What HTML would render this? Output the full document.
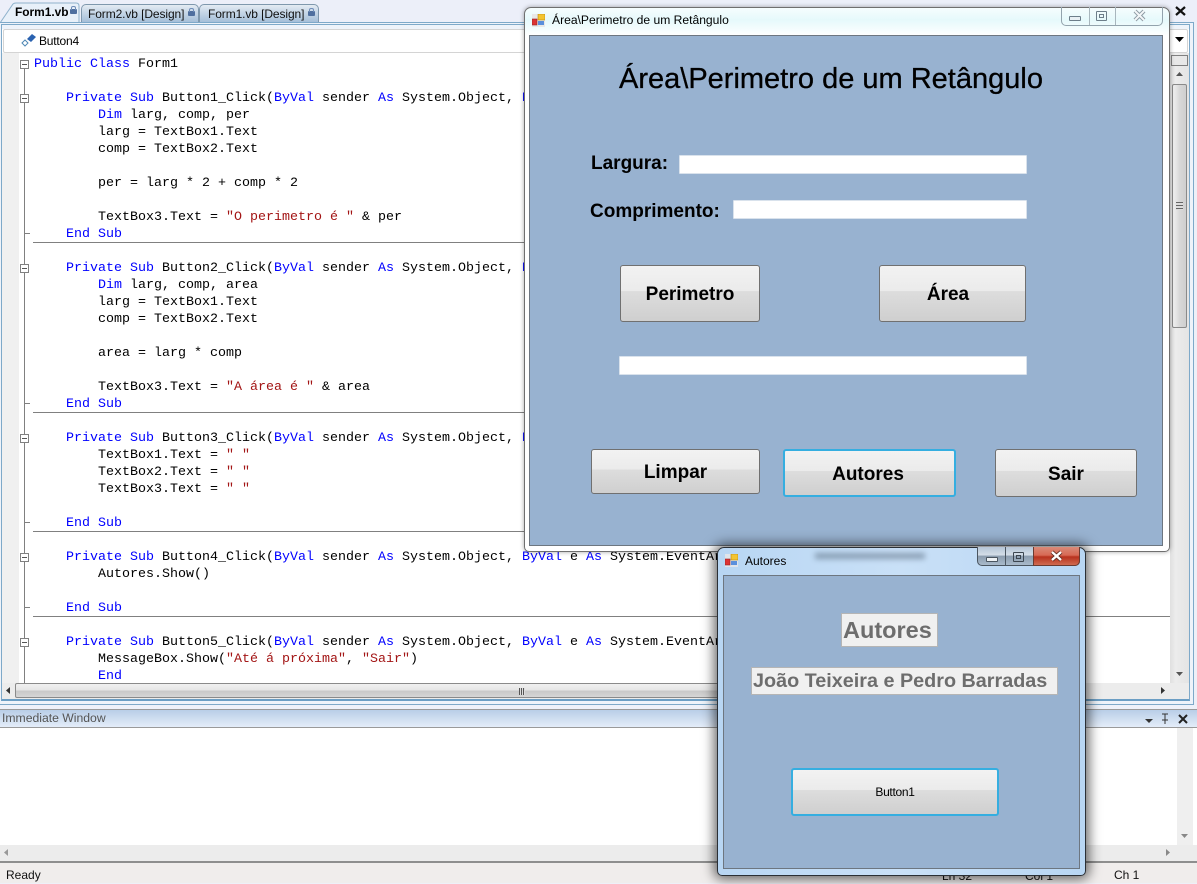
<!DOCTYPE html>
<html><head><meta charset="utf-8"><style>
html,body{margin:0;padding:0}
body{width:1197px;height:883px;overflow:hidden;position:relative;background:#eef0f8;font-family:"Liberation Sans",sans-serif}
.a{position:absolute;box-sizing:border-box}
.t{white-space:nowrap}
.code{position:absolute;left:34px;top:56px;width:700px;font:13.33px/17px "Liberation Mono",monospace;color:#000;white-space:pre}
.code b{font-weight:normal;color:#0000ff}.code i{font-style:normal;color:#a31515}
.tab{position:absolute;top:4px;height:18px;font-size:12px;line-height:19px;letter-spacing:-.1px;white-space:nowrap;box-sizing:border-box;background:linear-gradient(#e4ebf3,#c9d8e8 40%,#a5bfd9);border:1px solid #7f98ad;border-bottom:0;border-radius:5px 5px 0 0;color:#111}
.lock{position:absolute;width:7px;height:5px;background:#4f6f9f;border-radius:1px}
.lock:before{content:"";position:absolute;left:1px;top:-3px;width:5px;height:4px;box-sizing:border-box;border:1px solid #6f8db8;border-bottom:0;border-radius:2px 2px 0 0}
.sep{position:absolute;left:33px;width:1138px;height:1px;background:#808080}
.box{position:absolute;width:9px;height:9px;left:20px;border:1px solid #808080;background:#fff;box-sizing:border-box}
.box:after{content:"";position:absolute;left:1px;top:3px;width:5px;height:1px;background:#555}
.tick{position:absolute;left:24px;width:6px;height:1px;background:#808080}
.btn{position:absolute;box-sizing:border-box;border:1px solid #707070;border-radius:3px;background:linear-gradient(#f2f2f2 0,#ebebeb 45%,#dddddd 46%,#cfcfcf 100%);text-align:center;font-weight:bold;font-size:19px;color:#000;white-space:nowrap}
.btn.f{border:2px solid #35aee0}
.inp{position:absolute;background:#fff;border:1px solid #d9e2ec;box-sizing:border-box;border-radius:1px}
.lab{position:absolute;font-weight:bold;font-size:19px;color:#000;white-space:nowrap}
.win{position:absolute;box-sizing:border-box;border-radius:7px 7px 5px 5px}
.client{position:absolute;background:#98b2d0;border:1px solid #6d7680;box-sizing:border-box}
.ficon{position:absolute;width:13px;height:13px}
</style></head><body>

<!-- tabs -->
<div class="a" style="left:0;top:0;width:1197px;height:24px;background:#eceff9"></div>
<div class="tab" style="left:81px;width:118px;padding-left:6px">Form2.vb [Design]<span class="lock" style="left:106px;top:6px"></span></div>
<div class="tab" style="left:199px;width:120px;padding-left:8px">Form1.vb [Design]<span class="lock" style="left:108px;top:6px"></span></div>
<svg class="a" style="left:0;top:2px" width="82" height="24"><path d="M0 21L13 2Q14 1 16 1H76Q79 1 79 4V21z" fill="#e8f0f9" stroke="#8fb2cc"/></svg>
<div class="a t" style="left:15px;top:3px;font-weight:bold;font-size:11.900px;line-height:19px;color:#000">Form1.vb</div>
<span class="lock" style="left:70px;top:9px"></span>
<svg class="a" style="left:1174px;top:5px" width="13" height="12"><path d="M2 2l9 8M11 2l-9 8" stroke="#111" stroke-width="2.200" fill="none"/></svg>

<!-- editor frame -->
<div class="a" style="left:-2px;top:22px;width:1196px;height:683px;background:#eef3fa;border:1px solid #7ea9c9"></div>
<div class="a" style="left:1px;top:24px;width:1189px;height:677px;background:#fff;border:1px solid #7ea9c9;border-bottom:2px solid #6b9ec4"></div>
<div class="a" style="left:2px;top:25px;width:1187px;height:4px;background:#eef3fa"></div>
<div class="a" style="left:3px;top:29px;width:1185px;height:24px;background:#fff;border:1px solid #d4d4d4;border-radius:2px"></div>
<div class="a t" style="left:39px;top:33px;font-size:12px;line-height:16px;color:#000;letter-spacing:-.2px">Button4</div>
<svg class="a" style="left:20px;top:32px" width="17" height="16"><path d="M2 11l3-3 3 3-3 3z" fill="#fff" stroke="#4f88b5"/><path d="M7 7l5-5 4 3-5 5z" fill="#2a62b0"/></svg>
<svg class="a" style="left:1175px;top:37px" width="10" height="6"><path d="M0 0h9L4.500 5z" fill="#000"/></svg>

<!-- margin -->
<div class="a" style="left:2px;top:53px;width:17px;height:630px;background:#f0f0f0"></div>
<div class="a" style="left:24px;top:68px;width:1px;height:615px;background:#808080"></div>
<div class="box" style="top:60px"></div><div class="box" style="top:94px"></div><div class="box" style="top:264px"></div><div class="box" style="top:434px"></div><div class="box" style="top:553px"></div><div class="box" style="top:638px"></div>
<div class="tick" style="top:233px"></div><div class="tick" style="top:403px"></div><div class="tick" style="top:522px"></div><div class="tick" style="top:607px"></div>
<div class="sep" style="top:242px"></div><div class="sep" style="top:412px"></div><div class="sep" style="top:531px"></div><div class="sep" style="top:616px"></div>

<div class="code"><b>Public</b> <b>Class</b> Form1

    <b>Private</b> <b>Sub</b> Button1_Click(<b>ByVal</b> sender <b>As</b> System.Object, <b>ByVal</b> e <b>As</b> System.EventArgs)
        <b>Dim</b> larg, comp, per
        larg = TextBox1.Text
        comp = TextBox2.Text

        per = larg * 2 + comp * 2

        TextBox3.Text = <i>"O perimetro é "</i> &amp; per
    <b>End</b> <b>Sub</b>

    <b>Private</b> <b>Sub</b> Button2_Click(<b>ByVal</b> sender <b>As</b> System.Object, <b>ByVal</b> e <b>As</b> System.EventArgs)
        <b>Dim</b> larg, comp, area
        larg = TextBox1.Text
        comp = TextBox2.Text

        area = larg * comp

        TextBox3.Text = <i>"A área é "</i> &amp; area
    <b>End</b> <b>Sub</b>

    <b>Private</b> <b>Sub</b> Button3_Click(<b>ByVal</b> sender <b>As</b> System.Object, <b>ByVal</b> e <b>As</b> System.EventArgs)
        TextBox1.Text = <i>" "</i>
        TextBox2.Text = <i>" "</i>
        TextBox3.Text = <i>" "</i>

    <b>End</b> <b>Sub</b>

    <b>Private</b> <b>Sub</b> Button4_Click(<b>ByVal</b> sender <b>As</b> System.Object, <b>ByVal</b> e <b>As</b> System.EventArgs)
        Autores.Show()

    <b>End</b> <b>Sub</b>

    <b>Private</b> <b>Sub</b> Button5_Click(<b>ByVal</b> sender <b>As</b> System.Object, <b>ByVal</b> e <b>As</b> System.EventArgs)
        MessageBox.Show(<i>"Até á próxima"</i>, <i>"Sair"</i>)
        <b>End</b></div>

<!-- right scrollbar -->
<div class="a" style="left:1170px;top:53px;width:19px;height:630px;background:linear-gradient(90deg,#e0e0e0,#ececec 30%,#e4e4e4)"></div>
<div class="a" style="left:1171px;top:55px;width:17px;height:11px;background:#e8e8e8;border:1px solid #808080"></div>
<svg class="a" style="left:1176px;top:72px" width="8" height="5"><path d="M0 4h7L3.500 0z" fill="#555"/></svg>
<div class="a" style="left:1172px;top:84px;width:15px;height:244px;background:linear-gradient(90deg,#f1f1f1,#d8d8d8 50%,#cfcfcf);border:1px solid #8a8a8a;border-radius:2px"></div>
<div class="a" style="left:1176px;top:202px;width:7px;height:8px;background:repeating-linear-gradient(#666 0 1px,#ddd 1px 3px)"></div>
<svg class="a" style="left:1176px;top:672px" width="8" height="5"><path d="M0 0h7L3.500 4z" fill="#555"/></svg>

<!-- bottom scrollbar -->
<div class="a" style="left:2px;top:683px;width:1187px;height:16px;background:#ececec"></div>
<div class="a" style="left:15px;top:683px;width:710px;height:15px;background:linear-gradient(#f0f0f0,#e6e6e6 45%,#c9c9c9 55%,#d6d6d6);border:1px solid #8a8a8a;border-radius:2px"></div>
<div class="a" style="left:519px;top:688px;width:6px;height:7px;background:repeating-linear-gradient(90deg,#555 0 1px,#ddd 1px 2px)"></div>
<svg class="a" style="left:6px;top:687px" width="5" height="8"><path d="M4 0v7L0 3.500z" fill="#333"/></svg>
<svg class="a" style="left:1161px;top:687px" width="5" height="8"><path d="M0 0v7l4-3.500z" fill="#333"/></svg>

<!-- splitter / immediate window -->
<div class="a" style="left:0;top:705px;width:1197px;height:4px;background:#eef1f9"></div>
<div class="a" style="left:0;top:709px;width:1197px;height:19px;background:linear-gradient(#b9cee7,#e4edf9);border-top:1px solid #9a9a9a;border-bottom:1px solid #9a9a9a"></div>
<div class="a t" style="left:2px;top:710px;font-size:12.200px;line-height:17px;color:#555">Immediate Window</div>
<svg class="a" style="left:1145px;top:712px" width="48" height="14"><path d="M0 7h8L4 11z" fill="#333"/><path d="M17 2h6M20 2v6M17 8h6M20 8v4" stroke="#333" fill="none"/><path d="M34 3l8 8M42 3l-8 8" stroke="#222" stroke-width="2" fill="none"/></svg>
<div class="a" style="left:0;top:728px;width:1197px;height:118px;background:#fff"></div>
<div class="a" style="left:1177px;top:728px;width:16px;height:117px;background:#efefef"></div>
<svg class="a" style="left:1181px;top:834px" width="8" height="5"><path d="M0 0h7L3.500 4z" fill="#888"/></svg>
<div class="a" style="left:0;top:845px;width:1197px;height:17px;background:#ececec"></div>
<svg class="a" style="left:4px;top:849px" width="5" height="8"><path d="M4 0v7L0 3.500z" fill="#999"/></svg>
<svg class="a" style="left:1166px;top:849px" width="5" height="8"><path d="M0 0v7l4-3.500z" fill="#888"/></svg>

<!-- status bar -->
<div class="a" style="left:0;top:861px;width:1197px;height:22px;background:#f0edec;border-top:2px solid #8e8e8e"></div>
<div class="a t" style="left:6px;top:868px;font-size:12px;line-height:15px;color:#111">Ready</div>
<div class="a t" style="left:942px;top:869px;font-size:12px;line-height:15px;color:#111">Ln 32</div>
<div class="a t" style="left:1025px;top:869px;font-size:12px;line-height:15px;color:#111">Col 1</div>
<div class="a t" style="left:1114px;top:868px;font-size:12px;line-height:15px;color:#111">Ch 1</div>

<!-- main window -->
<div class="win" style="left:524px;top:7px;width:646px;height:545px;background:linear-gradient(#f6fdfe,#e6f9fb 12px,#fff 28px);border:1px solid #6f6f6f;box-shadow:0 0 5px rgba(0,0,0,.35)"></div>
<svg class="ficon" style="left:532px;top:14px" viewBox="0 0 13 13"><rect x="0" y="0" width="13" height="13" fill="#e8e8e8"/><rect x="6" y="0" width="7" height="6" fill="#f4c430" stroke="#b98a10" stroke-width=".6"/><rect x="0" y="5" width="5" height="6" fill="#d33" stroke="#922" stroke-width=".6"/><rect x="6" y="7" width="6" height="4" fill="#5b8fdc"/></svg>
<div class="a t" style="left:552px;top:13px;font-size:12.100px;line-height:15px;color:#000">Área\Perimetro de um Retângulo</div>
<div class="a" style="left:1061px;top:7px;width:102px;height:19px;border:1px solid #93a3ad;border-top:0;border-radius:0 0 5px 5px"></div>
<div class="a" style="left:1089px;top:7px;width:1px;height:18px;background:#a8b6bd"></div>
<div class="a" style="left:1115px;top:7px;width:1px;height:18px;background:#a8b6bd"></div>
<div class="a" style="left:1069px;top:16px;width:12px;height:5px;border:1px solid #6d7e8a;background:#e8f0f4;border-radius:1px"></div>
<div class="a" style="left:1096px;top:11px;width:11px;height:10px;border:1px solid #6d7e8a;border-radius:1px"><div class="a" style="left:2px;top:2px;width:5px;height:4px;border:1px solid #6d7e8a"></div></div>
<svg class="a" style="left:1133px;top:9px" width="13" height="13"><path d="M2 2l9 9M11 2l-9 9" stroke="#8d9aa3" stroke-width="4" fill="none"/><path d="M2 2l9 9M11 2l-9 9" stroke="#f4f7f8" stroke-width="2" fill="none"/></svg>

<div class="client" style="left:529px;top:35px;width:634px;height:511px"></div>
<div class="a t" style="left:619px;top:62px;font-size:29px;line-height:34px;color:#000;-webkit-text-stroke:.3px #000">Área\Perimetro de um Retângulo</div>
<div class="lab" style="left:591px;top:153px;line-height:22px">Largura:</div>
<div class="inp" style="left:679px;top:155px;width:348px;height:19px"></div>
<div class="lab" style="left:590px;top:201px;line-height:22px">Comprimento:</div>
<div class="inp" style="left:733px;top:200px;width:294px;height:19px"></div>
<div class="btn" style="left:620px;top:265px;width:140px;height:57px;line-height:57px">Perimetro</div>
<div class="btn" style="left:879px;top:265px;width:147px;height:57px;line-height:57px;padding-right:9px">Área</div>
<div class="inp" style="left:619px;top:356px;width:408px;height:19px"></div>
<div class="btn" style="left:591px;top:449px;width:169px;height:45px;line-height:46px">Limpar</div>
<div class="btn f" style="left:783px;top:449px;width:173px;height:48px;line-height:47px;padding-right:3px">Autores</div>
<div class="btn" style="left:995px;top:449px;width:142px;height:48px;line-height:49px">Sair</div>

<!-- Autores window -->
<div class="win" style="left:717px;top:547px;width:369px;height:329px;background:linear-gradient(90deg,#b8d6f3,#c9e0f7 50%,#b8d6f3);border:1px solid #2a2f35;box-shadow:0 0 12px 3px rgba(0,0,0,.6)"></div>
<div class="a" style="left:815px;top:553px;width:110px;height:6px;background:#5f7286;filter:blur(3px);opacity:.6"></div>
<svg class="ficon" style="left:725px;top:554px" viewBox="0 0 13 13"><rect x="0" y="0" width="13" height="13" fill="#e0e4ea"/><rect x="6" y="0" width="7" height="6" fill="#f4c430" stroke="#b98a10" stroke-width=".6"/><rect x="0" y="5" width="5" height="6" fill="#d33" stroke="#922" stroke-width=".6"/><rect x="6" y="7" width="6" height="4" fill="#5b8fdc"/></svg>
<div class="a t" style="left:745px;top:554px;font-size:12px;line-height:15px;color:#000">Autores</div>
<div class="a" style="left:977px;top:547px;width:103px;height:19px;background:linear-gradient(#b5c5d6,#d4dee8 45%,#8b9cae 50%,#a9bacb);border:1px solid #4a5560;border-top:0;border-radius:0 0 5px 5px"></div>
<div class="a" style="left:1033px;top:547px;width:47px;height:19px;background:linear-gradient(#d98a78,#d86a55 45%,#b8321e 55%,#cf6a50);border:1px solid #6b3a30;border-top:0;border-radius:0 0 5px 0"></div>
<div class="a" style="left:1005px;top:547px;width:1px;height:18px;background:#4a5560"></div>
<div class="a" style="left:986px;top:557px;width:12px;height:5px;border:1px solid #4a5560;background:#eef2f5;border-radius:1px"></div>
<div class="a" style="left:1013px;top:552px;width:11px;height:10px;border:1px solid #3c4650;border-radius:1px"><div class="a" style="left:2px;top:2px;width:5px;height:4px;border:1px solid #3c4650"></div></div>
<svg class="a" style="left:1050px;top:550px" width="13" height="12"><path d="M2 2l9 8M11 2l-9 8" stroke="#5a2a20" stroke-width="4" fill="none"/><path d="M2 2l9 8M11 2l-9 8" stroke="#fff" stroke-width="2.400" fill="none"/></svg>
<div class="client" style="left:723px;top:575px;width:357px;height:294px"></div>
<div class="a t" style="left:841px;top:613px;width:97px;height:34px;background:#f0f0f0;border:1px solid #b5b5b5;font-weight:bold;font-size:23.500px;line-height:33px;color:#6d6d6d;padding-left:1px">Autores</div>
<div class="a t" style="left:751px;top:667px;width:307px;height:28px;background:#f0f0f0;border:1px solid #b5b5b5;font-weight:bold;font-size:19.800px;line-height:26px;color:#6d6d6d;padding-left:1px">João Teixeira e Pedro Barradas</div>
<div class="btn f" style="left:791px;top:768px;width:208px;height:48px;line-height:45px;font-weight:normal;font-size:12px;letter-spacing:-.3px">Button1</div>
</body></html>
